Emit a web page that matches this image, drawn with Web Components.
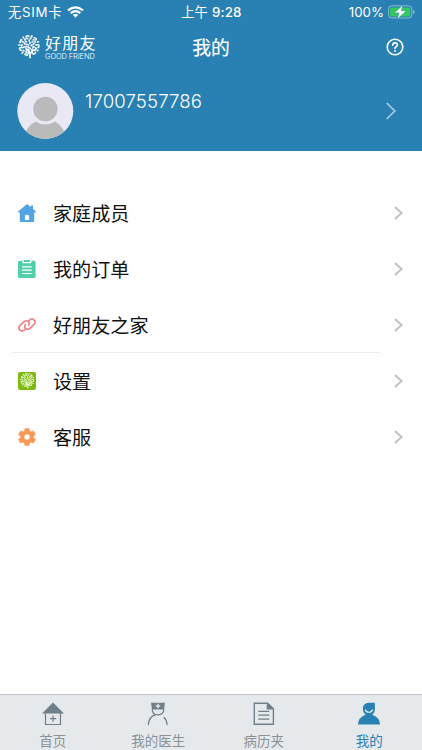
<!DOCTYPE html>
<html lang="zh-CN">
<head>
<meta charset="utf-8">
<title>我的</title>
<style>
html,body{margin:0;height:100%}
body{font-family:Inter,"Noto Sans CJK SC",sans-serif;background:#fefefe;color:#111}
</style>
</head>
<body>
<profile-page></profile-page>
<script>
const define = (name, html, setup) => customElements.define(name, class extends HTMLElement {
  connectedCallback() {
    if (this.shadowRoot) return;
    const t = document.createElement('template');
    t.innerHTML = html;
    this.attachShadow({mode: 'open'}).append(t.content.cloneNode(true));
    if (setup) setup(this, this.shadowRoot);
  }
});

define('brand-tree', `
<style>:host{display:block;width:22px;height:24px}svg{display:block;width:100%;height:100%}</style>
<svg viewBox="0 0 22 24" fill="none" stroke="currentColor" stroke-linecap="round">
  <path stroke-width="1.7" d="M12 22.6V18L10 14.8M12 18.8L14.8 15.7"/>
  <path stroke-width=".9" d="M10 14.8L7 12.3M10 14.8L10.8 9.5M14.5 15.5L15 11M14.5 15.5L18 13.7M11.8 19L7 16.6"/>
  <g id="leaves" stroke-width="1.65"></g>
</svg>`, (host, root) => {
  const rings = [[2.2,5],[4.6,10],[7,15],[9.3,21]];
  let d = '';
  rings.forEach(([r, n], k) => {
    for (let i = 0; i < n; i++) {
      const a = i / n * Math.PI * 2 + k * .37;
      const x = 11 + Math.cos(a) * r, y = 10.6 + Math.sin(a) * r;
      if (y > 18 && Math.abs(x - 11.8) < 2) continue;
      const b = a + (i % 3 - 1) * .9;
      d += `M${x.toFixed(2)} ${y.toFixed(2)}l${(Math.cos(b) * .9).toFixed(2)} ${(Math.sin(b) * .9).toFixed(2)}`;
    }
  });
  root.getElementById('leaves').innerHTML = `<path d="${d}"/>`;
});

define('status-bar', `
<style>
:host{display:grid;grid-template-columns:1fr auto 1fr;align-items:center;height:24px;padding:0 7px 0 8px;font-size:13.3px;line-height:24px;color:#fff}
div{display:flex;align-items:center}
.right{justify-content:flex-end;gap:4px}
.left{gap:5px}
.left span{letter-spacing:.7px}
.left svg{margin-bottom:1px}
.time{gap:4px}
.time b{font-weight:500;letter-spacing:.2px}
svg{display:block}
</style>
<div class="left"><span>无SIM卡</span>
<svg width="17" height="12" viewBox="0 0 17 12" fill="none" stroke="#fff" stroke-width="2.2"><path d="M1 4.4Q8.5-1.8 16 4.4M3.7 7.2Q8.5 3.1 13.3 7.2"/><path d="M5.8 8.8Q8.5 6.6 11.2 8.8L8.5 11.7Z" fill="#fff" stroke="none"/></svg></div>
<div class="time"><span>上午</span><b>9:28</b></div>
<div class="right"><span>100%</span>
<svg width="27" height="14" viewBox="0 0 27 14"><rect x=".6" y=".8" width="23.3" height="12.2" rx="3.4" fill="none" stroke="#8dbbd2"/><rect x="2.2" y="2.4" width="20.1" height="9" rx="2" fill="#35c85b"/><path d="M25.2 4.8v4.4q1.5-.6 1.5-2.2t-1.5-2.2" fill="#8dbbd2"/><path d="M14.9 0L6.3 7.9h4.8L9.2 14l9.2-8.2h-5.1z" fill="#fff" stroke="#2981b3" stroke-width=".5"/></svg></div>`);

define('title-bar', `
<style>
:host{display:grid;grid-template-columns:1fr auto 1fr;align-items:center;height:46px;padding:0 18px;color:#fff}
.brand{display:flex;gap:5px;align-items:center}
brand-tree{width:22px;height:24px}
.name{display:flex;flex-direction:column}
b{font-weight:400;font-size:16px;line-height:18px;letter-spacing:1.3px;margin-top:1px}
small{font:300 7.5px/9px Inter,sans-serif;white-space:nowrap;letter-spacing:-.13px}
h1{font-size:18.8px;font-weight:400;-webkit-text-stroke:.2px #fff;line-height:28px;margin:3px 0 0}
svg{display:block;justify-self:end}
</style>
<div class="brand"><brand-tree></brand-tree><div class="name"><b>好朋友</b><small>GOOD FRIEND</small></div></div>
<h1>我的</h1>
<svg width="18" height="18" viewBox="0 0 18 18" fill="none" stroke="#fff" stroke-width="1.6"><circle cx="9" cy="9" r="7.8"/><path stroke-linecap="round" d="M6.7 7.2Q6.8 4.9 9.1 4.9T11.4 7Q11.4 8 10.1 8.8Q9 9.5 9 10.5"/><circle cx="9" cy="12.9" r="1" fill="#fff" stroke="none"/></svg>`);

define('user-card', `
<style>
:host{display:flex;align-items:flex-start;height:68px;padding:13px 25px 0 17px;color:#fff}
.num{flex:1;margin:6px 0 0 11px;font-size:18.6px;line-height:24px;font-weight:300;letter-spacing:.12px}
.go{margin-top:19px}
svg{display:block}
</style>
<svg width="57" height="57" viewBox="0 0 57 57"><defs><clipPath id="c"><circle cx="28.3" cy="28" r="28"/></clipPath></defs><g clip-path="url(#c)"><path fill="#e9e9f6" d="M0 0h57v57H0z"/><path fill="#bababa" d="M6 57Q9 43 18.5 38.5Q28 44.5 38 38.5Q47 43 50 57Z"/></g><circle cx="28.4" cy="26" r="12.2" fill="#bababa"/></svg>
<span class="num">17007557786</span>
<svg class="go" width="12" height="18" viewBox="0 0 12 18" fill="none" stroke="#a9cbdd" stroke-width="1.7"><path d="M1.7 1L9.8 9l-8.1 8"/></svg>`);

const icons = {
  home: `<path fill="#51a5e3" d="M9 0L.4 7.3q-.8 1.2.5 1.3H1.8v8.6q0 .8.8.8h12.8q.8 0 .8-.8V8.6h.9q1.3-.1.5-1.3L15 5V1.4h-2.3v1.7z"/><path fill="#fff" d="M6.9 16v-4.2Q7.2 10.7 9 10.7t2.1 1.1V16z"/>`,
  order: `<rect y=".8" width="17.6" height="17.2" rx="1.6" fill="#52ceaa"/><path fill="#fff" d="M4.4 0h9v2.3q0 1-1 1h-7q-1 0-1-1z"/><path fill="#52ceaa" d="M5.8 0h6.2v2H5.8z"/><path stroke="#fff" stroke-width="1.2" d="M4 6.9h9.7M4 10.2h9.7M4 13.5h9.7"/>`,
  link: `<g fill="none" stroke="#f08489" stroke-width="1.7" stroke-linecap="round"><path d="M7.2 13.2L5.9 14.4Q3.9 15.8 2 14.2Q-.1 12 1.7 9.9L6.3 5.5Q8.3 4 10.3 5.5Q12 7.3 10.6 9.4"/><path d="M10.8 4.8L12.1 3.6Q14.1 2.2 16 3.8Q18.1 6 16.3 8.1L11.7 12.5Q9.7 14 7.7 12.5Q6 10.7 7.4 8.6"/></g>`,
  gear: `<path fill="#f89a55" stroke="#f89a55" stroke-width=".6" stroke-linejoin="round" fill-rule="evenodd" d="M7 .4h4l.5 2.5 1.6.9 2.4-.9 2 3.5-1.9 1.7v1.8l1.9 1.7-2 3.5-2.4-.9-1.6.9-.5 2.5H7l-.5-2.5-1.6-.9-2.4.9-2-3.5 1.9-1.7V8.1L.5 6.4l2-3.5 2.4.9 1.6-.9zM9 6a3 3 0 100 6 3 3 0 000-6z"/>`
};

define('menu-row', `
<style>
:host{display:flex;align-items:center;height:56px;padding:0 18px;box-sizing:border-box}
.icon{width:18px;height:18px;display:block}
.tile{display:flex;align-items:center;justify-content:center;background:#80b913;border-radius:2px;color:#eefad8}
.tile brand-tree{width:14.5px;height:16px}
.label{flex:1;margin:2px 0 0 17px;font-size:19.1px;line-height:28px;color:#111}
svg{display:block}
</style>
<span class="icon"></span><span class="label"><slot></slot></span>
<svg width="11" height="14" viewBox="0 0 11 14" fill="none" stroke="#c2c2c2" stroke-width="2"><path d="M2 .9L8.6 7 2 13.1"/></svg>`, (host, root) => {
  const box = root.querySelector('.icon'), name = host.getAttribute('icon');
  if (name === 'tree') { box.classList.add('tile'); box.innerHTML = '<brand-tree></brand-tree>'; }
  else box.innerHTML = `<svg width="18" height="18" viewBox="0 0 18 18">${icons[name]}</svg>`;
});

const tabs = {
  home: `<path fill="currentColor" d="M12 .5L23 11.5H1z"/><path d="M4.5 11v11.5h15V11M12 13.4v6.4M8.8 16.6h6.4" fill="none" stroke="currentColor" stroke-width="1.2"/>`,
  doctor: `<path fill="currentColor" d="M5 .7h14l-1 6.7H6z"/><path stroke="#e5e9ec" stroke-width="1.3" d="M12 1.8v4.4M9.8 4h4.4"/><path fill="none" stroke="currentColor" stroke-width="1.2" d="M6.2 7q0 5.8 5.8 5.8T17.8 7M9.8 12.7Q2.8 14.3 2.3 23M17.8 15.3q3 2.7 3.4 7.7"/>`,
  file: `<path fill="none" stroke="currentColor" stroke-width="1.4" d="M2.3 1.2h13.2l5.9 5.5v15.6H2.3z"/><path fill="currentColor" d="M14.7 1h1.3l5.6 5.3v1.2h-6.9z"/><path stroke="currentColor" stroke-width="1.2" d="M6.3 9.3h11M6.3 13.2h11M6.3 17.1h11"/>`,
  me: `<path fill="currentColor" d="M17.9.7V7.5a6 6 0 01-12 0Q5.6.7 12 .7zM1 22.6Q1 15.6 8.2 13V11.5h7.4V13Q23 15.6 23 22.6z"/><path fill="none" stroke="#e5e9ec" stroke-width="1.1" d="M8.3 7.5Q9 10.3 11.9 10.3T15.5 7.5"/>`
};

define('tab-item', `
<style>
:host{display:flex;flex-direction:column;align-items:center;padding-top:7px;color:#8b9296;--mark:#708089}
:host([active]){color:#2981b3;--mark:#2981b3}
svg{display:block;color:var(--mark)}
span{font-size:13.5px;line-height:20px;margin-top:5px}
</style>
<svg width="24" height="24" viewBox="0 0 24 24"></svg><span><slot></slot></span>`, (host, root) => {
  root.querySelector('svg').innerHTML = tabs[host.getAttribute('icon')];
});

define('tab-bar', `
<style>:host{display:grid;grid-template-columns:repeat(4,1fr);height:55px;border-top:1px solid #c5c6cb;background:#e5e9ec}</style>
<slot></slot>`);

define('profile-page', `
<style>
:host{display:flex;flex-direction:column;height:100vh;overflow:hidden}
header{background:#2981b3;height:151px;flex:none}
main{flex:1;padding-top:34px}
hr{border:0;height:1px;background:#ebebeb;margin:-1px 42px 0 12px}
</style>
<header><status-bar></status-bar><title-bar></title-bar><user-card></user-card></header>
<main>
<menu-row icon="home">家庭成员</menu-row><menu-row icon="order">我的订单</menu-row><menu-row icon="link">好朋友之家</menu-row>
<hr>
<menu-row icon="tree">设置</menu-row><menu-row icon="gear">客服</menu-row>
</main>
<tab-bar><tab-item icon="home">首页</tab-item><tab-item icon="doctor">我的医生</tab-item><tab-item icon="file">病历夹</tab-item><tab-item icon="me" active>我的</tab-item></tab-bar>`);
</script>
</body>
</html>
